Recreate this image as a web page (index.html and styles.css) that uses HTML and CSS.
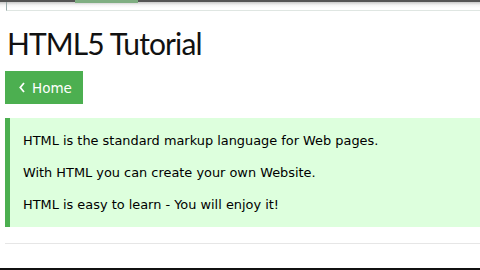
FILE: index.html
```html
<!DOCTYPE html>
<html lang="en">
<head>
  <meta charset="UTF-8" />
  <title>HTML5 Tutorial</title>
  <link rel="stylesheet" href="styles.css">
</head>
<body>
  <div class="topbar">
    <span class="tab-active"></span>
    <div class="topbar-inner"></div>
  </div>

  <div class="main">
    <h1>HTML5 Tutorial</h1>

    <a class="btn-home" href="#">
      <svg class="chev" width="6" height="11" viewBox="0 0 6 11">
        <polyline points="5,1 1.3,5.5 5,10" fill="none" stroke="#fff" stroke-width="1.8"/>
      </svg>
      Home
    </a>

    <div class="note">
      <p>HTML is the standard markup language for Web pages.</p>
      <p>With HTML you can create your own Website.</p>
      <p>HTML is easy to learn - You will enjoy it!</p>
    </div>

    <hr class="divider">
  </div>

  <div class="bottom-edge"></div>
</body>
</html>
```

FILE: styles.css
```css
* {
  margin: 0;
  padding: 0;
  box-sizing: border-box;
}

body {
  width: 480px;
  height: 270px;
  overflow: hidden;
  background: #fff;
  font-family: "DejaVu Sans", Verdana, sans-serif;
  color: #000;
  position: relative;
}

.topbar {
  height: 11px;
  border-top: 2px solid #555;
  background: linear-gradient(#c8c8c8, #f4f4f4 3px, #fff 6px);
  position: relative;
}

.tab-active {
  position: absolute;
  top: -2px;
  left: 75px;
  width: 63px;
  height: 3px;
  background: #7fae82;
}

.topbar-inner {
  margin-left: 6px;
  height: 9px;
  border-left: 1px solid #9aa;
  border-bottom: 1px solid #dfe6e2;
}

.main {
  padding: 0 0 0 5px;
}

h1 {
  font-family: Lato, "Segoe UI", sans-serif;
  font-weight: 400;
  font-size: 30px;
  letter-spacing: -0.9px;
  line-height: 40px;
  margin: 12px 0 8px 2px;
  color: #111;
}

.btn-home {
  display: flex;
  align-items: center;
  gap: 7px;
  width: 78px;
  height: 33px;
  background: #4caf50;
  color: #fff;
  text-decoration: none;
  font-size: 13.5px;
  padding-left: 14px;
}

.chev {
  display: block;
}

.note {
  margin-top: 14px;
  background: #ddffdd;
  border-left: 5px solid #4caf50;
  padding: 10px 0 10px 13px;
  height: 109px;
}

.note p {
  font-size: 12.9px;
  line-height: 18px;
  margin: 4px 0 14px;
}

.divider {
  border: none;
  border-top: 1px solid #e6e6e6;
  margin-top: 16px;
}

.bottom-edge {
  position: absolute;
  left: 0;
  bottom: 0;
  width: 100%;
  height: 2px;
  background: #111;
}
```
